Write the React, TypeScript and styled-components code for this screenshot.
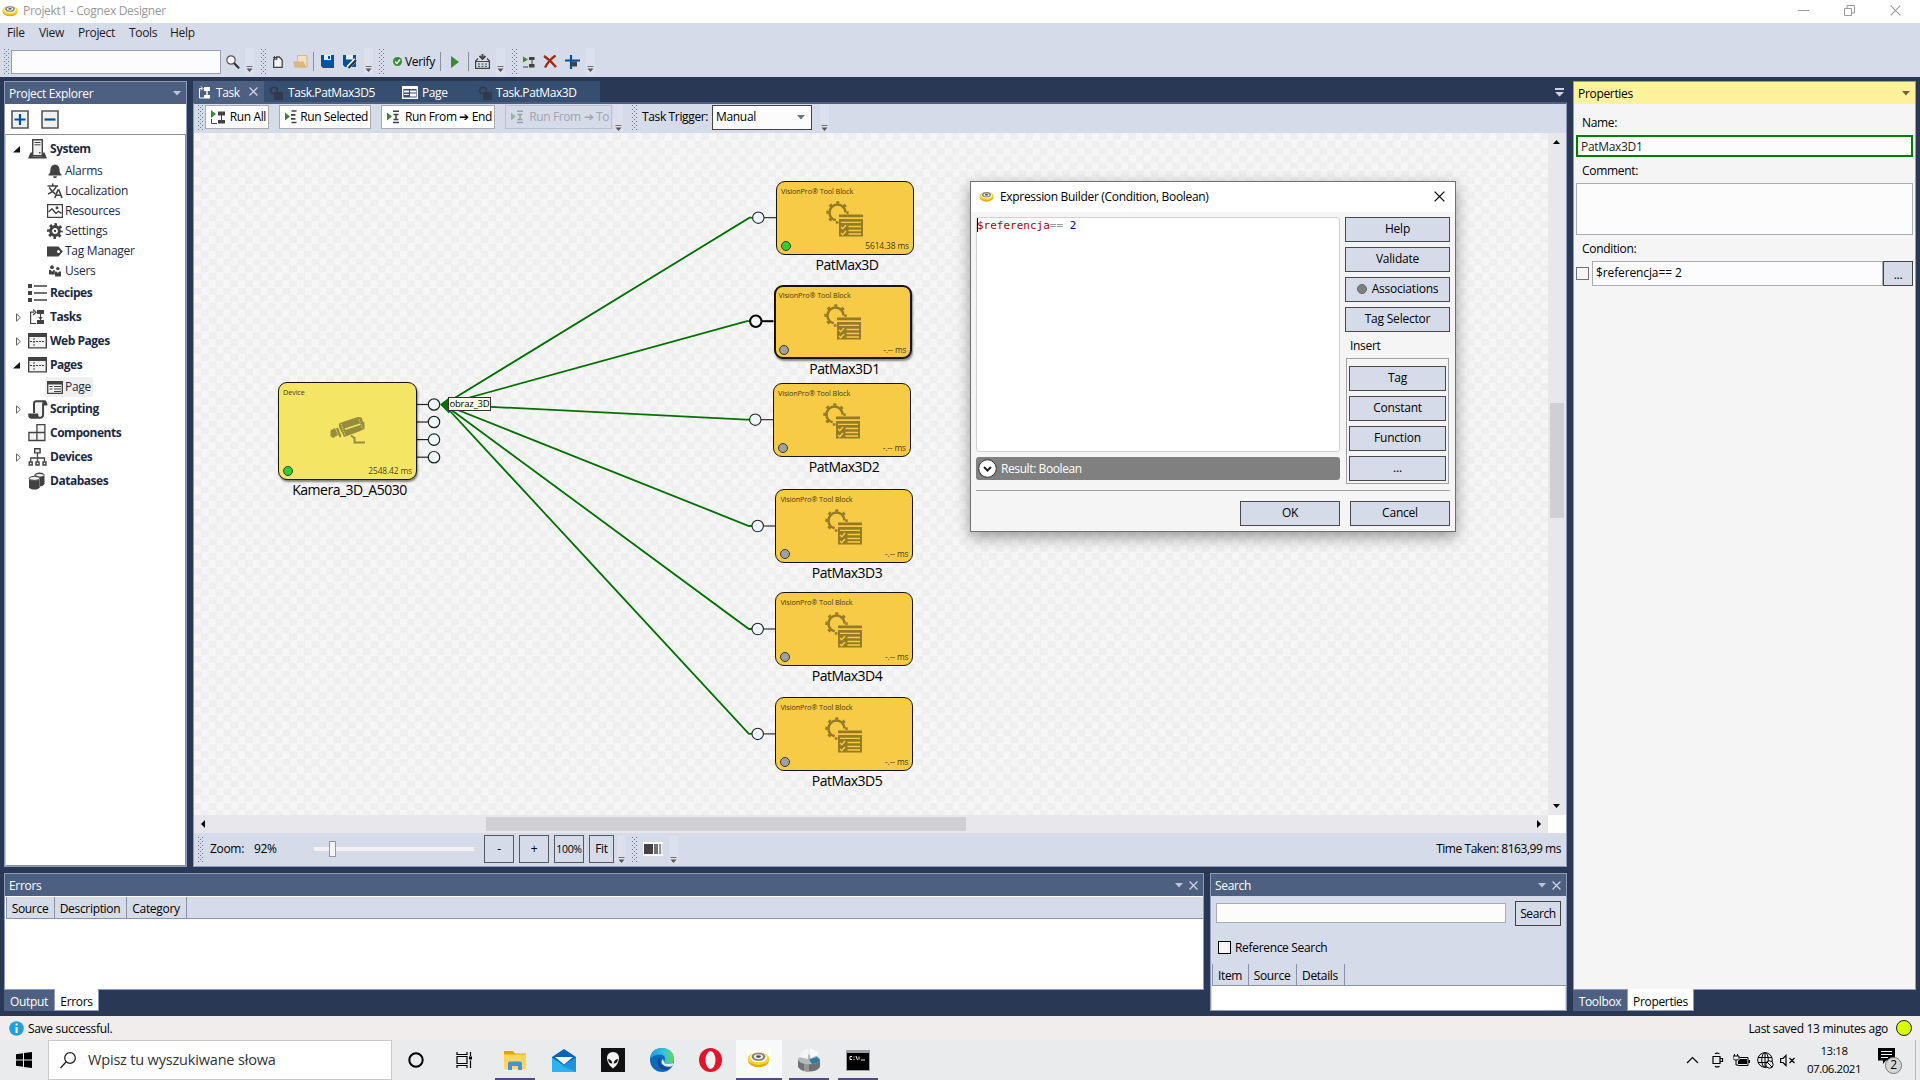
import React from "react";
import styled, { createGlobalStyle, css } from "styled-components";

const c = {
  navy: "#293955",
  steel: "#4d6082",
  edge: "#8e9bbc",
  pale: "#d6dbe9",
  ink: "#1b1b1c",
  glyph: "#424242",
  green: "#388a34",
  blue: "#00539c",
};

const Global = createGlobalStyle`
  * { box-sizing: border-box; }
  html, body { margin: 0; padding: 0; overflow: hidden; }
  body { font-family: "Open Sans", "Noto Sans", sans-serif; font-size: 12px; letter-spacing: -0.32px; line-height: 16px; color: #000; }
  svg { display: block; flex: none; }
`;

const Frame = styled.div`
  position: relative;
  width: 1920px;
  height: 1080px;
  display: flex;
  flex-direction: column;
  overflow: hidden;
  white-space: nowrap;
`;

/* ---------- window chrome ---------- */
const TitleBar = styled.header`
  height: 23px;
  flex: none;
  display: flex;
  align-items: center;
  padding: 1px 19px 2px 2px;
  background: #fff;
  color: #999;
  gap: 5px;
`;
const WindowControls = styled.div`
  margin-left: auto;
  display: flex;
  gap: 35px;
  padding-bottom: 2px;
`;
const MenuBar = styled.nav`
  height: 20px;
  flex: none;
  display: flex;
  align-items: center;
  background: ${c.pale};
  color: ${c.ink};
`;
const MenuItem = styled.span<{ $w: number }>`
  width: ${(p) => p.$w}px;
`;
const ToolBar = styled.div`
  height: 34px;
  flex: none;
  display: flex;
  align-items: center;
  padding: 3px 0 0 4px;
  background: ${c.pale};
`;
const QuickBox = styled.div`
  width: 210px;
  height: 24px;
  border: 1px solid #999faf;
  background: #fcfcfc;
  margin-right: 5px;
`;
const ToolIcon = styled.span<{ $w: number }>`
  width: ${(p) => p.$w}px;
  display: flex;
  flex: none;
`;
const Grip = styled.i<{ $gap?: number }>`
  flex: none;
  width: 5px;
  height: 25px;
  margin-right: ${(p) => (p.$gap ?? 0) + 1}px;
  background-image: linear-gradient(#747b8e, #747b8e), linear-gradient(#747b8e, #747b8e),
    linear-gradient(#747b8e, #747b8e);
  background-size: 1px 1px;
  background-repeat: repeat-y;
  background-image: conic-gradient(from 270deg at 1px 1px, #6d7488 90deg, transparent 0),
    conic-gradient(from 270deg at 1px 1px, #6d7488 90deg, transparent 0);
  background-size: 4px 4px;
  background-position: 0 0, 2px 2px;
  background-repeat: repeat;
`;
const OverflowBox = styled.span<{ $gap?: number; $pad?: number }>`
  flex: none;
  width: 9px;
  height: 27px;
  background: #dce0ec;
  display: flex;
  align-items: flex-end;
  justify-content: center;
  padding-bottom: ${(p) => p.$pad ?? 3}px;
  margin-right: ${(p) => p.$gap ?? 0}px;
`;
const Divider = styled.i<{ $gap: number }>`
  width: 1px;
  height: 19px;
  background: #8591a2;
  margin-right: ${(p) => p.$gap}px;
`;
const VerifyLabel = styled.span`
  width: 35px;
`;

const Overflow = ({ gap, pad }: { gap?: number; pad?: number }) => (
  <OverflowBox $gap={gap} $pad={pad}>
    <svg width="7" height="6">
      <path d="M0.5 0.5h6" stroke="#717171" />
      <path d="M0.5 2.5h6L3.5 6z" fill="#555" />
    </svg>
  </OverflowBox>
);

/* ---------- docking area ---------- */
const Workspace = styled.main`
  height: 939px;
  flex: none;
  display: flex;
  gap: 6px;
  padding: 4px 0 5px 4px;
  background: ${c.navy};
`;
const MainColumn = styled.div`
  width: 1563px;
  display: flex;
  flex-direction: column;
  gap: 6px;
`;
const UpperRow = styled.div`
  height: 786px;
  display: flex;
  gap: 6px;
`;
const LowerRow = styled.div`
  height: 138px;
  display: flex;
  gap: 6px;
`;
const DockColumn = styled.section<{ $w: number }>`
  width: ${(p) => p.$w}px;
  height: 100%;
  display: flex;
  flex-direction: column;
`;
const DockPanel = styled.div<{ $bg?: string }>`
  flex: 1;
  min-height: 0;
  display: flex;
  flex-direction: column;
  border: 1px solid ${c.edge};
  background: ${(p) => p.$bg ?? "#fff"};
`;
const DockHeader = styled.div<{ $active?: boolean }>`
  height: 22px;
  flex: none;
  display: flex;
  align-items: center;
  justify-content: space-between;
  padding: 2px 5px 0 4px;
  background: ${(p) => (p.$active ? "#fff29d" : c.steel)};
  color: ${(p) => (p.$active ? "#000" : "#fff")};
`;
const HeaderTools = styled.span`
  display: flex;
  align-items: center;
  gap: 6px;
  padding-bottom: 2px;
`;
const DockTabs = styled.div`
  height: 21px;
  flex: none;
  display: flex;
`;
const DockTab = styled.span<{ $w: number; $on?: boolean }>`
  width: ${(p) => p.$w}px;
  text-align: center;
  padding-top: 4px;
  background: ${(p) => (p.$on ? "#fff" : c.steel)};
  color: ${(p) => (p.$on ? "#000" : "#fff")};
  ${(p) =>
    p.$on &&
    css`
      margin-top: -1px;
      padding-top: 5px;
      border: 1px solid ${c.edge};
      border-top: 0;
    `}
`;

const Caret = ({ fill = "#bdc5d8" }: { fill?: string }) => (
  <svg width="8" height="5">
    <path d="M0 0h8L4 4.5z" fill={fill} />
  </svg>
);
const Cross = ({ size = 9, color = "#ced4e3", w = 1.4 }: { size?: number; color?: string; w?: number }) => (
  <svg width={size} height={size} viewBox="0 0 10 10">
    <path d="M0.6 0.6l8.8 8.8M9.4 0.6L0.6 9.4" stroke={color} strokeWidth={w} fill="none" />
  </svg>
);

/* ---------- project explorer ---------- */
const ExpandBar = styled.div`
  height: 30px;
  flex: none;
  display: flex;
  align-items: center;
  gap: 12px;
  padding: 0 6px;
`;
const Tree = styled.ul`
  flex: 1;
  margin: 0;
  padding: 2px 0 0 0;
  list-style: none;
  border: 1px solid #8a8f99;
  border-left-color: #c4c8d2;
  color: #1e1e1e;
`;
const TreeRow = styled.li<{ $child?: boolean }>`
  display: flex;
  align-items: center;
  height: ${(p) => (p.$child ? 20 : 24)}px;
  padding-left: ${(p) => (p.$child ? 39 : 7)}px;
`;
const Arrow = styled.span`
  width: 15px;
  display: flex;
`;
const RootIcon = styled.span`
  width: 22px;
  display: flex;
`;
const RootLabel = styled.b`
  color: #1b2a47;
  font-weight: 700;
  letter-spacing: -0.48px;
`;
const Child = styled.span<{ $on?: boolean }>`
  display: flex;
  align-items: center;
  gap: 2px;
  height: 20px;
  padding: 0 2px;
  color: #1b2a47;
  letter-spacing: -0.26px;
  background: ${(p) => (p.$on ? "#f0f0f0" : "transparent")};
`;

const G = c.glyph;
const icons: Record<string, React.ReactNode> = {
  System: (
    <svg width="19" height="20" viewBox="0 0 19 20">
      <path d="M0 19.5h19l-2.5-6h-2.6v4H4.4v-4H2.5z" fill={G} />
      <path d="M4.7 0.7h9.6v16H4.7z" fill="#f0f0f0" stroke={G} strokeWidth="1.4" />
      <path d="M6.5 3.5h6M6.5 5.8h6" stroke={G} />
      <path d="M11 13h1.5v1.5H11z" fill={G} />
    </svg>
  ),
  Recipes: (
    <svg width="19" height="18" viewBox="0 0 19 18">
      <path d="M0 0h4v4H0zM0 7h4v4H0zM0 14h4v4H0z" fill={G} />
      <path d="M6 2h13M6 9h13M6 16h13" stroke={G} strokeWidth="1.3" />
    </svg>
  ),
  Tasks: (
    <svg width="19" height="16" viewBox="0 0 19 16">
      <path d="M8 14.5H2.6V3.2H6" fill="none" stroke={G} strokeWidth="1.2" />
      <path d="M5 0.5L8 3.2 5 6" fill="none" stroke={G} strokeWidth="1.2" />
      <path d="M9 1h7v4H9zM9 11h7v4H9z" fill={G} />
      <path d="M12.5 5v6M10.7 8l1.8 2 1.8-2" fill="none" stroke={G} strokeWidth="1.1" />
    </svg>
  ),
  Web: (
    <svg width="19" height="16" viewBox="0 0 19 16">
      <path d="M0.7 0.7h17.6v14.2H0.7z" fill="#f3f3f3" stroke={G} strokeWidth="1.4" />
      <path d="M0 0h19v4H0z" fill={G} />
      <path d="M2 8.5h15" stroke={G} strokeDasharray="2 1" />
      <path d="M6 5v9" stroke={G} strokeDasharray="2 1" />
    </svg>
  ),
  Scripting: (
    <svg width="20" height="19" viewBox="0 0 20 19">
      <path d="M6 13V3.5Q6 1.2 8.4 1.2h9.2q-2.5 0.6-2.5 3.4v9.8q0 3.4-3.6 3.4H3.6q-2.4 0-2.4-3.4h8q0 3.4 2.2 3.4" fill="#f3f3f3" stroke={G} strokeWidth="2" />
      <path d="M14.6 1.2h3.6q1.3 0.8 1.3 4.2h-4.4" fill={G} />
      <path d="M1 14.2h8.5l1 3.8H3.5Q1 18 1 14.2z" fill={G} />
    </svg>
  ),
  Components: (
    <svg width="18" height="18" viewBox="0 0 18 18">
      <path d="M8.9 0.7h8v7.8h-8zM0.9 8.5h8v8h-8zM8.9 8.5h8v8h-8z" fill="#f3f3f3" stroke={G} strokeWidth="1.3" />
    </svg>
  ),
  Devices: (
    <svg width="19" height="18" viewBox="0 0 19 18">
      <path d="M6.7 0.7h5.4v4.2H6.7zM1.2 14h3v3h-3zM8 14h3v3H8zM15 14h3v3h-3z" fill="#f3f3f3" stroke={G} strokeWidth="1.4" />
      <path d="M9.5 5v8.5M2.7 13.5V10h13.8v3.5" fill="none" stroke={G} strokeWidth="1.3" />
    </svg>
  ),
  Databases: (
    <svg width="18" height="18" viewBox="0 0 18 18">
      <path d="M6 3.4Q7.5 0.6 11.5 0.6t5 2V12q-1 2-4.6 2.5V6" fill={G} />
      <path d="M1 6.6v8.6Q2.2 17.6 6.3 17.6t5.4-2.4V6.6z" fill={G} />
      <ellipse cx="6.4" cy="6.4" rx="5.2" ry="2" fill="#f3f3f3" stroke={G} />
      <path d="M7 3.1q1.6-1.2 4.4-1.2t4.4 0.9-4 1.9" fill="#f3f3f3" />
    </svg>
  ),
  Alarms: (
    <svg width="16" height="15" viewBox="0 0 16 15">
      <path d="M8 0.5q4.6 0.6 4.6 5.5 0 3.6 1.9 4.2v1.2H1.5v-1.2Q3.4 9.6 3.4 6 3.4 1.1 8 0.5zM6 12.3h4q-0.3 2-2 2t-2-2z" fill={G} />
    </svg>
  ),
  Localization: (
    <svg width="16" height="16" viewBox="0 0 16 16">
      <path d="M0.5 3h10.5M5.7 0.5V3M2.2 4.5q3 4.5 6.3 6.5M9.3 3.5Q7 8.5 1 11" fill="none" stroke={G} strokeWidth="1.5" />
      <path d="M7.8 15l3.1-8h1l3.1 8M8.9 12.3h5" fill="none" stroke={G} strokeWidth="1.6" />
    </svg>
  ),
  Resources: (
    <svg width="16" height="14" viewBox="0 0 16 14">
      <path d="M0.6 0.6h14.8v12.8H0.6z" fill="#fff" stroke={G} strokeWidth="1.2" />
      <path d="M1.5 8L5 4.8 9 9.5l2.5-2.2 3 2" fill="none" stroke={G} strokeWidth="1.4" />
      <circle cx="10" cy="3.8" r="1.5" fill={G} />
    </svg>
  ),
  Settings: (
    <svg width="16" height="16" viewBox="0 0 16 16">
      <circle cx="8" cy="8" r="4.4" fill="none" stroke={G} strokeWidth="3" />
      <circle cx="8" cy="8" r="6.5" fill="none" stroke={G} strokeWidth="2.8" strokeDasharray="2.55" strokeDashoffset="1.27" />
      <circle cx="8" cy="8" r="1.2" fill={G} />
    </svg>
  ),
  Tag: (
    <svg width="16" height="11" viewBox="0 0 16 11">
      <path d="M0 0.5h11.5l4.3 5-4.3 5H0z" fill={G} />
      <circle cx="11.5" cy="5.5" r="1.5" fill="#fff" />
    </svg>
  ),
  Users: (
    <svg width="16" height="12" viewBox="0 0 16 12">
      <circle cx="5" cy="2.2" r="1.9" fill={G} />
      <circle cx="10.8" cy="3.6" r="1.7" fill={G} />
      <path d="M2 5h1.8l1.4 1.7L6.6 5h1.2v4.5H2zM8 6.5h1.5l1.3 1.5 1.3-1.5H14v5H8z" fill={G} />
    </svg>
  ),
  Page: (
    <svg width="16" height="13" viewBox="0 0 16 13">
      <path d="M0.7 0.7h14.6v11.6H0.7z" fill="#f3f3f3" stroke={G} strokeWidth="1.3" />
      <path d="M0 0h16v3.5H0z" fill={G} />
      <path d="M2.5 5.5h3M7 5.5h7M2.5 8h3M7 8h7M7 10.5h7" stroke={G} strokeWidth="1.2" />
    </svg>
  ),
};

type Node = { label: string; icon: string; state?: "open" | "closed"; child?: boolean; on?: boolean };
const treeRows: Node[] = [
  { label: "System", icon: "System", state: "open" },
  { label: "Alarms", icon: "Alarms", child: true },
  { label: "Localization", icon: "Localization", child: true },
  { label: "Resources", icon: "Resources", child: true },
  { label: "Settings", icon: "Settings", child: true },
  { label: "Tag Manager", icon: "Tag", child: true },
  { label: "Users", icon: "Users", child: true },
  { label: "Recipes", icon: "Recipes" },
  { label: "Tasks", icon: "Tasks", state: "closed" },
  { label: "Web Pages", icon: "Web", state: "closed" },
  { label: "Pages", icon: "Web", state: "open" },
  { label: "Page", icon: "Page", child: true, on: true },
  { label: "Scripting", icon: "Scripting", state: "closed" },
  { label: "Components", icon: "Components" },
  { label: "Devices", icon: "Devices", state: "closed" },
  { label: "Databases", icon: "Databases" },
];

const ExpandIcon = ({ plus }: { plus?: boolean }) => (
  <svg width="18" height="19" viewBox="0 0 18 19">
    <path d="M1 1h16v17H1z" fill="#f0f0f0" stroke="#555" strokeWidth="1.6" />
    <path d={plus ? "M3.5 9.5h11M9 4v11" : "M3.5 9.5h11"} stroke={c.blue} strokeWidth="2.2" />
  </svg>
);

/* ---------- document area ---------- */
const DocColumn = styled.section`
  width: 1374px;
  display: flex;
  flex-direction: column;
`;
const DocTabs = styled.div`
  height: 22px;
  flex: none;
  display: flex;
  border-bottom: 1px solid ${c.steel};
  color: #fff;
`;
const DocTab = styled.div<{ $w: number; $on?: boolean; $pad: number }>`
  width: ${(p) => p.$w}px;
  height: 21px;
  padding: 2px 0 0 ${(p) => p.$pad}px;
  display: flex;
  align-items: center;
  letter-spacing: -0.42px;
  background: ${(p) => (p.$on ? c.steel : "#364e6f")};
`;
const DocTabLabel = styled.span<{ $ml: number }>`
  margin-left: ${(p) => p.$ml}px;
`;
const TabClose = styled.span`
  margin-left: auto;
  margin-right: 6px;
  padding-bottom: 2px;
`;
const TabsMenu = styled.span`
  margin: 7px 3px 0 auto;
`;
const DocBody = styled.div`
  flex: 1;
  display: flex;
  flex-direction: column;
  border: 1px solid ${c.edge};
  border-top-color: ${c.steel};
  background: ${c.pale};
`;
const RunBar = styled.div`
  height: 29px;
  flex: none;
  display: flex;
  align-items: center;
  padding: 0 0 3px 4px;
`;
const RunButton = styled.span<{ $w: number; $gap: number; $off?: boolean }>`
  width: ${(p) => p.$w}px;
  height: 24px;
  margin-right: ${(p) => p.$gap}px;
  display: flex;
  align-items: center;
  justify-content: space-between;
  padding: 0 2px 0 5px;
  border: 1px solid ${(p) => (p.$off ? "#bcc0cc" : "#ababab")};
  background: ${(p) => (p.$off ? "transparent" : "#fff")};
  color: ${(p) => (p.$off ? "#a2a4b0" : "#000")};
  letter-spacing: -0.38px;
`;
const RunIcon = styled.span<{ $off?: boolean }>`
  opacity: ${(p) => (p.$off ? 0.4 : 1)};
`;
const TriggerLabel = styled.span`
  width: 74px;
  padding-left: 4px;
  letter-spacing: -0.36px;
`;
const Combo = styled.span`
  width: 100px;
  height: 25px;
  margin: 0 8px 0 0;
  padding: 0 6px 0 3px;
  display: flex;
  align-items: center;
  justify-content: space-between;
  border: 1px solid #434346;
  background: #fcfcfc;
`;
const CanvasGrid = styled.div`
  display: grid;
  grid-template: 682px 18px / 1354px 18px;
  flex: none;
  background: #fff;
`;
const Canvas = styled.div`
  position: relative;
  overflow: hidden;
  background: repeating-conic-gradient(#efefef 0% 25%, #f6f6f6 0% 50%) 0 0 / 14.72px 14.72px;
`;
const VScroll = styled.div`
  background: #e8e8ec;
  display: flex;
  flex-direction: column;
  align-items: center;
  padding: 7px 1px 7px 0;
`;
const VThumb = styled.i`
  width: 14px;
  height: 115px;
  background: #cfcfd4;
  margin: 259px 0 auto;
`;
const HScroll = styled.div`
  background: #e8e8ec;
  display: flex;
  align-items: center;
  padding: 0 7px 0 7px;
`;
const HThumb = styled.i`
  width: 480px;
  height: 14px;
  background: #cfcfd4;
  margin: 0 auto 0 281px;
`;
const ZoomBar = styled.div`
  flex: 1;
  display: flex;
  align-items: center;
  padding: 0 5px 1px 4px;
`;
const ZoomText = styled.span<{ $w: number }>`
  width: ${(p) => p.$w}px;
  padding-bottom: 1px;
`;
const Slider = styled.div`
  width: 160px;
  height: 4px;
  background: #f3f3f5;
  display: flex;
  align-items: center;
  padding-left: 15px;
  margin-right: 10px;
`;
const SliderThumb = styled.i`
  width: 7px;
  height: 16px;
  background: #f5f5f5;
  border: 1px solid #999;
`;
const ZoomButton = styled.span<{ $w?: number; $gap?: number; $small?: boolean }>`
  width: ${(p) => p.$w ?? 30}px;
  height: 28px;
  margin-right: ${(p) => p.$gap ?? 5}px;
  display: flex;
  align-items: center;
  justify-content: center;
  border: 1px solid #555963;
  font-size: ${(p) => (p.$small ? 10.5 : 12)}px;
`;
const TimeTaken = styled.span`
  margin-left: auto;
  letter-spacing: -0.45px;
`;

/* ---------- diagram ---------- */
const Wires = styled.svg`
  position: absolute;
  inset: 0;
`;
const Block = styled.div<{ $x: number; $y: number; $w: number; $h: number; $bg: string; $sel?: boolean; $shadow?: boolean }>`
  position: absolute;
  left: ${(p) => p.$x - 194}px;
  top: ${(p) => p.$y - 133}px;
  width: ${(p) => p.$w}px;
  height: ${(p) => p.$h}px;
  border: ${(p) => (p.$sel ? 2 : 1)}px solid #16160e;
  border-radius: 9px;
  background: ${(p) => p.$bg};
  box-shadow: ${(p) => (p.$shadow ? "1px 2px 2px rgba(0,0,0,.45)" : "none")};
  display: flex;
  flex-direction: column;
  justify-content: space-between;
  align-items: center;
  padding: ${(p) => (p.$sel ? "2px 3px 2px" : "3px 4px 3px")};
`;
const BlockKind = styled.span`
  align-self: flex-start;
  font: 7.3px/12px "Open Sans", sans-serif;
  letter-spacing: -0.13px;
  color: rgba(0, 0, 0, 0.78);
`;
const BlockGlyph = styled.span<{ $up: number }>`
  margin-top: -${(p) => p.$up}px;
`;
const BlockFoot = styled.span`
  width: 100%;
  height: 10px;
  display: flex;
  align-items: center;
  justify-content: space-between;
  font: 8.4px/10px "Open Sans", sans-serif;
  letter-spacing: -0.12px;
  color: rgba(0, 0, 0, 0.75);
`;
const Lamp = styled.i<{ $on?: boolean }>`
  width: 10px;
  height: 10px;
  border-radius: 50%;
  border: 1.5px solid #3a3a25;
  background: ${(p) => (p.$on ? "#32cd32" : "#a0a0a0")};
`;
const BlockName = styled.span<{ $x: number; $y: number }>`
  position: absolute;
  left: ${(p) => p.$x - 294}px;
  top: ${(p) => p.$y - 143}px;
  width: 200px;
  text-align: center;
  font-size: 14px;
  line-height: 20px;
  letter-spacing: -0.5px;
`;
const PortTip = styled.span`
  position: absolute;
  left: 254px;
  top: 264px;
  width: 43px;
  height: 14px;
  border: 1px solid #333;
  background: #ffffe1;
  font-size: 9.5px;
  line-height: 11px;
  letter-spacing: -0.2px;
  text-align: center;
`;

const ToolBlockGlyph = () => (
  <svg width="38" height="36" viewBox="0 0 38 36">
    <circle cx="11.5" cy="11.5" r="8" fill="none" stroke="#967b26" strokeWidth="2.6" strokeDasharray="36 14.3" strokeDashoffset="-14.3" />
    <circle cx="11.5" cy="11.5" r="10" fill="none" stroke="#967b26" strokeWidth="2.4" strokeDasharray="3.2 4.65" strokeDashoffset="1.6" />
    <path d="M12.5 13h25v22h-25z" fill="#f7cb45" />
    <path d="M13 13.5h24v2.8H13zM13 18h24v17.5H13z" fill="#967b26" />
    <path d="M15 21.3h20M22.5 25.5H35M22.5 29.5H35M22.5 33H35" stroke="#f7cb45" strokeWidth="1.3" />
    <path d="M15 26l1.7 1.7 3.3-3.7M15 32l1.7 1.7 3.3-3.7" stroke="#f7cb45" strokeWidth="1.4" fill="none" />
  </svg>
);
const CameraGlyph = () => (
  <svg width="36" height="28" viewBox="0 0 36 28">
    <g fill="#978c3e">
      <path d="M9 11V7.500L14 5.500 28 1l3.500 0.500 1.300 3.500 1.700 2v6L29 15.500 14 21z" />
      <path d="M0.500 14.500l4.500-2.500 3 7-5 3L0.500 20z" />
      <path d="M6 12.500l2-1 3.500 9-2 1z" />
    </g>
    <path d="M15 13.300l15-5" stroke="#f4e564" strokeWidth="1.500" />
    <path d="M11 8l4 11M29 3l3.500 10" stroke="#f4e564" strokeWidth="0.800" strokeDasharray="1.500 1" />
    <path d="M21 19.500l3.500 2.500v4.500H35" stroke="#978c3e" strokeWidth="2" fill="none" />
  </svg>
);

const blocks = [
  { name: "PatMax3D", x: 776, y: 181, lx: 847, ms: "5614.38 ms", on: true },
  { name: "PatMax3D1", x: 773.5, y: 284.5, lx: 844.5, ms: "-.-- ms", sel: true },
  { name: "PatMax3D2", x: 773, y: 383, lx: 844, ms: "-.-- ms" },
  { name: "PatMax3D3", x: 775.4, y: 489.3, lx: 847, ms: "-.-- ms" },
  { name: "PatMax3D4", x: 775.4, y: 592.3, lx: 847, ms: "-.-- ms" },
  { name: "PatMax3D5", x: 775.4, y: 697.2, lx: 847, ms: "-.-- ms" },
];

/* ---------- lists and forms ---------- */
const Columns = styled.div`
  height: 22px;
  flex: none;
  margin: 1px 0 0 1px;
  display: flex;
  border-bottom: 1px solid #8a93ab;
  border-left: 1px solid #8a93ab;
  background: ${c.pale};
`;
const Column = styled.span<{ $w: number }>`
  width: ${(p) => p.$w}px;
  padding-right: 1px;
  border-right: 1px solid #8a93ab;
  text-align: center;
  line-height: 23px;
`;
const SearchForm = styled.div`
  display: flex;
  align-items: center;
  justify-content: space-between;
  height: 34px;
  padding: 0 5px 0 5px;
`;
const SearchInput = styled.div`
  width: 290px;
  height: 20px;
  border: 1px solid #ababb3;
  background: #fcfcfc;
`;
const SearchButton = styled.span`
  width: 46px;
  height: 25px;
  border: 1px solid #434346;
  text-align: center;
  line-height: 23px;
  letter-spacing: -0.4px;
`;
const CheckRow = styled.label`
  display: flex;
  align-items: center;
  gap: 4px;
  height: 33px;
  padding: 2px 0 0 7px;
`;
const CheckBox = styled.i<{ $dark?: boolean }>`
  flex: none;
  width: 13px;
  height: 13px;
  border: 1px solid ${(p) => (p.$dark ? "#000" : "#717171")};
  background: #f6f6f6;
`;
const ResultArea = styled.div`
  flex: 1;
  margin: 0 1px;
  background: #fff;
`;
const FormBody = styled.div`
  padding: 9px 2px 0 2px;
  display: flex;
  flex-direction: column;
`;
const FieldLabel = styled.span<{ $h: number; $line: number }>`
  height: ${(p) => p.$h}px;
  padding-left: 6px;
  line-height: ${(p) => p.$line}px;
`;
const NameField = styled.div`
  height: 22px;
  border: 2px solid #008000;
  background: #fcfcfc;
  padding-left: 3px;
  line-height: 20px;
  color: #1e1e1e;
`;
const CommentField = styled.div`
  height: 52px;
  border: 1px solid #ababb3;
  background: #fcfcfc;
`;
const ConditionRow = styled.div`
  display: flex;
  align-items: center;
`;
const ConditionField = styled.div`
  width: 291px;
  height: 25px;
  margin-left: 3px;
  border: 1px solid #ababb3;
  background: #fcfcfc;
  padding-left: 3px;
  line-height: 21px;
  letter-spacing: -0.12px;
`;
const MoreButton = styled.span`
  flex: 1;
  height: 25px;
  border: 1px solid #434346;
  background: ${c.pale};
  text-align: center;
  line-height: 25px;
`;

/* ---------- dialog ---------- */
const Dialog = styled.div`
  position: absolute;
  left: 970px;
  top: 181px;
  width: 486px;
  height: 351px;
  border: 1px solid #707070;
  background: #f5f5f5;
  box-shadow: 0 5px 14px rgba(0, 0, 0, 0.38);
  display: flex;
  flex-direction: column;
`;
const DialogTitle = styled.div`
  height: 30px;
  flex: none;
  display: flex;
  align-items: center;
  gap: 6px;
  padding: 0 10px 1px 8px;
  background: #fff;
`;
const DialogText = styled.span`
  padding-top: 1px;
`;
const DialogClose = styled.span`
  margin-left: auto;
`;
const DialogBody = styled.div`
  display: flex;
  justify-content: space-between;
  margin: 5px 5px 0;
  height: 274px;
  border-bottom: 1px solid #a0a0a0;
`;
const EditorColumn = styled.div`
  width: 364px;
  display: flex;
  flex-direction: column;
  gap: 5px;
`;
const Editor = styled.div`
  height: 235px;
  border: 1px solid #d2d2d2;
  border-radius: 3px;
  background: #fff;
  font: 11px/15px "DejaVu Sans Mono", monospace;
  letter-spacing: 0;
  white-space: pre;
  display: flex;
`;
const Caretline = styled.i`
  width: 1px;
  height: 14px;
  background: #000;
  margin-right: -1px;
`;
const Token = styled.span<{ $c: string }>`
  color: ${(p) => p.$c};
`;
const ResultBar = styled.div`
  height: 23px;
  border-radius: 3px;
  background: #808080;
  color: #fff;
  display: flex;
  align-items: center;
  gap: 4px;
  padding-left: 2px;
  letter-spacing: -0.4px;
`;
const SideColumn = styled.div`
  width: 105px;
  display: flex;
  flex-direction: column;
  gap: 5px;
`;
const Push = styled.button<{ $w?: number }>`
  width: ${(p) => (p.$w ? `${p.$w}px` : "100%")};
  height: 25px;
  flex: none;
  padding: 0 0 1px;
  display: flex;
  align-items: center;
  justify-content: center;
  gap: 5px;
  border: 1px solid #4a4a4e;
  border-radius: 0;
  background: ${c.pale};
  font: inherit;
  letter-spacing: -0.22px;
  color: #000;
`;
const Dot = styled.i`
  width: 10px;
  height: 10px;
  border-radius: 50%;
  background: #808080;
  border: 1px solid #666;
`;
const InsertLabel = styled.span`
  padding: 1px 0 0 5px;
  height: 16px;
`;
const InsertBox = styled.div`
  margin: 0 1px;
  height: 126px;
  padding: 7px 2px 0;
  border: 1px solid #a0a0a0;
  display: flex;
  flex-direction: column;
  gap: 5px;
`;
const DialogFoot = styled.div`
  display: flex;
  justify-content: flex-end;
  gap: 10px;
  padding: 10px 5px 0;
`;

/* ---------- status bar and taskbar ---------- */
const StatusBar = styled.footer`
  height: 24px;
  flex: none;
  display: flex;
  align-items: center;
  gap: 4px;
  padding: 1px 8px 0 9px;
  background: #f1edec;
`;
const Saved = styled.span`
  margin-left: auto;
`;
const SaveLamp = styled.i`
  width: 16px;
  height: 16px;
  border-radius: 50%;
  border: 1px solid #1c1c1c;
  background: #d8ff00;
  margin: 0 0 2px 4px;
`;
const Taskbar = styled.div`
  height: 40px;
  flex: none;
  display: flex;
  background: #e9ebed;
`;
const TaskCell = styled.div<{ $w: number; $run?: boolean; $on?: boolean; $gap?: number }>`
  width: ${(p) => p.$w}px;
  margin-right: ${(p) => p.$gap ?? 0}px;
  display: flex;
  align-items: center;
  justify-content: center;
  background: ${(p) => (p.$on ? "#f8f9fa" : "transparent")};
  border-bottom: 2px solid ${(p) => (p.$run ? "#504a86" : "transparent")};
  padding-top: 2px;
`;
const WinSearch = styled.div`
  width: 344px;
  border: 1px solid #c9c9ca;
  background: #fff;
  display: flex;
  align-items: center;
  gap: 12px;
  padding-left: 11px;
  font-size: 14.5px;
  letter-spacing: -0.18px;
  color: #333;
`;
const Tray = styled.div`
  margin-left: auto;
  width: 234px;
  display: flex;
  align-items: center;
`;
const TrayIcon = styled.span<{ $w: number }>`
  width: ${(p) => p.$w}px;
  flex: none;
`;
const Clock = styled.div`
  width: 58px;
  display: flex;
  flex-direction: column;
  align-items: center;
  font-size: 11.5px;
  line-height: 18px;
  letter-spacing: -0.45px;
`;
const Notices = styled.div`
  position: relative;
  width: 38px;
  margin-left: 14px;
  padding-left: 1px;
  height: 24px;
`;
const NoticeCount = styled.span`
  position: absolute;
  left: 8px;
  top: 9px;
  width: 17px;
  height: 17px;
  border-radius: 50%;
  border: 1px solid #777;
  background: #d7d7d7;
  text-align: center;
  line-height: 14px;
`;
const ShowDesktop = styled.i`
  width: 5px;
  height: 40px;
  border-left: 1px solid #b5b7ba;
`;

const Cognex = ({ w = 16 }: { w?: number }) => (
  <svg width={w} height={w * 0.75} viewBox="0 0 24 18">
    <ellipse cx="12" cy="10" rx="11" ry="7" fill="#e8a900" />
    <ellipse cx="12" cy="8" rx="11.5" ry="6.5" fill="#ffd42a" />
    <ellipse cx="12" cy="6.8" rx="8.7" ry="5" fill="#fff" />
    <ellipse cx="12" cy="6" rx="7.2" ry="4.3" fill="#808080" />
    <ellipse cx="12" cy="6" rx="4.8" ry="2.6" fill="#f2f2f2" />
    <ellipse cx="12" cy="5.8" rx="2.6" ry="1.4" fill="#555" />
  </svg>
);
const FlowGlyph = ({ color = G }: { color?: string }) => (
  <svg width="13" height="13" viewBox="0 0 13 13">
    <path d="M6 12H1.5V2.5H4" fill="none" stroke={color} />
    <path d="M3 0.5l2 2-2 2" fill="none" stroke={color} />
    <path d="M6 1h6v4H6zM6 9h6v3.5H6z" fill={color} />
    <path d="M9 4v6" stroke={color} strokeWidth="1.5" />
  </svg>
);
const BlockTabGlyph = () => (
  <svg width="14" height="14" viewBox="0 0 14 14">
    <circle cx="5" cy="4.5" r="3.3" fill="none" stroke="#303a49" strokeWidth="1.6" />
    <path d="M5 6h9v8H5z" fill="#303a49" />
  </svg>
);
const RunGlyph = ({ kind }: { kind: "all" | "sel" | "from" }) => (
  <svg width="14" height="14" viewBox="0 0 14 14">
    <path d="M0 2.5l5 4-5 4z" fill={c.green} transform={kind === "all" ? "translate(0 -2.5)" : ""} />
    {kind === "all" && (
      <>
        <path d="M0.5 9v4.5H6" fill="none" stroke={G} />
        <path d="M7 1.5h7v4H7zM7 10h7v3.5H7z" fill={G} />
        <path d="M10.5 5v5" stroke={G} />
      </>
    )}
    {kind === "sel" && <path d="M6.500 1h5M6 4.800h4.500M6 8.800h4.500M6.500 12.500h5" stroke={G} strokeWidth="1.700" />}
    {kind === "from" && (
      <>
        <path d="M6 1.200h6M6.500 4.500h5M6 12.600h6" stroke={G} strokeWidth="1.500" />
        <path d="M6.500 9.500h5M9 4.500v5" stroke={G} strokeWidth="1.500" />
      </>
    )}
  </svg>
);

export default function App() {
  return (
    <>
      <Global />
      <Frame>
        <TitleBar>
          <Cognex />
          <span>Projekt1 - Cognex Designer</span>
          <WindowControls>
            <svg width="11" height="11"><path d="M0 5.5h11" stroke="#999" /></svg>
            <svg width="11" height="11"><path d="M0.5 3.5h7v7h-7zM3 3V0.5h7.5v7.5H8" fill="none" stroke="#999" /></svg>
            <Cross size={11} color="#999" w={1} />
          </WindowControls>
        </TitleBar>
        <MenuBar>
          <MenuItem $w={7} />
          <MenuItem $w={32}>File</MenuItem>
          <MenuItem $w={39}>View</MenuItem>
          <MenuItem $w={51}>Project</MenuItem>
          <MenuItem $w={41}>Tools</MenuItem>
          <MenuItem $w={40}>Help</MenuItem>
        </MenuBar>
        <ToolBar>
          <Grip $gap={1} />
          <QuickBox />
          <ToolIcon $w={19}>
            <svg width="14" height="14" viewBox="0 0 14 14">
              <circle cx="5" cy="5" r="4.2" fill="#f4f4f4" stroke="#555" strokeWidth="1.2" />
              <path d="M8 8l5 5.3" stroke="#333" strokeWidth="2.2" />
            </svg>
          </ToolIcon>
          <Overflow gap={7} />
          <Grip $gap={6} />
          <ToolIcon $w={20}>
            <svg width="10" height="12" viewBox="0 0 10 12">
              <path d="M0.7 3.2h3V1h2.6l2.900 3v7.3H0.7z" fill="#f3f3f3" stroke={G} strokeWidth="1.3" />
              <path d="M0 1.5h3M1.5 0v3" stroke={G} />
            </svg>
          </ToolIcon>
          <ToolIcon $w={20}>
            <svg width="15" height="13" viewBox="0 0 15 13">
              <path d="M4.500 0.500h9.500v11.500H4.500z" fill="#f0e0c4" stroke="#dcb67a" />
              <path d="M0 6.500h10.500l3 6H1.500z" fill="#dcb67a" />
            </svg>
          </ToolIcon>
          <Divider $gap={7} />
          <ToolIcon $w={22}>
            <svg width="13" height="13" viewBox="0 0 13 13">
              <path d="M0 0h13v13H2l-2-2z" fill={c.blue} /><path d="M3 0h7v5H3z" fill="#e8ecf4" /><path d="M7 1h2v3H7z" fill={c.blue} />
            </svg>
          </ToolIcon>
          <ToolIcon $w={21}>
            <svg width="14" height="14" viewBox="0 0 14 14">
              <path d="M0 0h13v12H2l-2-2z" fill={c.blue} /><path d="M3 0h7v4.5H3z" fill="#e8ecf4" /><path d="M5 12.5l7.5-8" stroke="#fff" strokeWidth="4" /><path d="M5.5 13L13 5" stroke="#333" strokeWidth="2.2" />
            </svg>
          </ToolIcon>
          <Overflow gap={6} />
          <Grip $gap={8} />
          <ToolIcon $w={12}>
            <svg width="9" height="9"><circle cx="4.5" cy="4.5" r="4.5" fill={c.green} /><path d="M2 4.5l2 2 3-4" stroke="#fff" strokeWidth="1.3" fill="none" /></svg>
          </ToolIcon>
          <VerifyLabel>Verify</VerifyLabel>
          <Divider $gap={10} />
          <ToolIcon $w={17}>
            <svg width="9" height="12"><path d="M0 0l8 6-8 6z" fill={c.green} /></svg>
          </ToolIcon>
          <Divider $gap={6} />
          <ToolIcon $w={21}>
            <svg width="15" height="15" viewBox="0 0 15 15">
              <path d="M7.5 0v4M4.500 2l3 3 3-3" stroke={G} strokeWidth="1.8" fill="none" />
              <path d="M0.6 14.4V7L3 4.5M14.4 14.4V7L12 4.5M0 14.4h15M1 7.5h13" stroke={G} strokeWidth="1.2" fill="none" />
              <path d="M3 10h9M3 12.3h9" stroke={G} strokeDasharray="2 1.5" />
            </svg>
          </ToolIcon>
          <Overflow gap={7} />
          <Grip $gap={5} />
          <ToolIcon $w={20}>
            <svg width="12" height="12" viewBox="0 0 12 12">
              <path d="M0 0.5l5 3-5 3z" fill={c.green} /><path d="M6 1h5.5v3H6zM6 8h5.5v3.5H6z" fill={G} /><path d="M9 4v4M0 11h5" stroke={G} />
            </svg>
          </ToolIcon>
          <ToolIcon $w={22}>
            <svg width="14" height="13" viewBox="0 0 14 13"><path d="M1 1q6 4 12 11M12.5 0.5Q6 5 2 12.5" stroke="#a1260d" strokeWidth="2.3" fill="none" /></svg>
          </ToolIcon>
          <ToolIcon $w={21}>
            <svg width="15" height="14" viewBox="0 0 15 14"><path d="M0 5.500h15M6 0v14" stroke={c.blue} strokeWidth="2.2" /><path d="M7 6.500h5v5H7z" fill={G} /></svg>
          </ToolIcon>
          <Overflow />
        </ToolBar>

        <Workspace>
          <MainColumn>
            <UpperRow>
              <DockColumn $w={183}>
                <DockPanel>
                  <DockHeader>
                    Project Explorer
                    <HeaderTools><Caret /></HeaderTools>
                  </DockHeader>
                  <ExpandBar>
                    <ExpandIcon plus />
                    <ExpandIcon />
                  </ExpandBar>
                  <Tree>
                    {treeRows.map((r) =>
                      r.child ? (
                        <TreeRow key={r.label} $child>
                          <Child $on={r.on}>{icons[r.icon]}<span>{r.label}</span></Child>
                        </TreeRow>
                      ) : (
                        <TreeRow key={r.label}>
                          <Arrow>
                            {r.state === "open" && <svg width="8" height="7"><path d="M7 0v6.5H0z" fill="#111" /></svg>}
                            {r.state === "closed" && <svg width="8" height="9"><path d="M3.5 0.8l3.8 3.7-3.8 3.7z" fill="#fff" stroke="#666" /></svg>}
                          </Arrow>
                          <RootIcon>{icons[r.icon]}</RootIcon>
                          <RootLabel>{r.label}</RootLabel>
                        </TreeRow>
                      )
                    )}
                  </Tree>
                </DockPanel>
              </DockColumn>

              <DocColumn>
                <DocTabs>
                  <DocTab $w={71} $pad={5} $on>
                    <FlowGlyph color="#fff" />
                    <DocTabLabel $ml={5}>Task</DocTabLabel>
                    <TabClose><Cross /></TabClose>
                  </DocTab>
                  <DocTab $w={132} $pad={5}>
                    <BlockTabGlyph />
                    <DocTabLabel $ml={5}>Task.PatMax3D5</DocTabLabel>
                  </DocTab>
                  <DocTab $w={77} $pad={6}>
                    <svg width="16" height="13" viewBox="0 0 16 13">
                      <path d="M0.7 0.7h14.6v11.6H0.7z" fill="#364e6f" stroke="#fff" strokeWidth="1.4" />
                      <path d="M0 0h16v3H0zM2 4.5h5v2H2zM8 4.5h6v2H8zM2 8h5v1H2zM8 7.5h6v3H8z" fill="#fff" />
                    </svg>
                    <DocTabLabel $ml={4}>Page</DocTabLabel>
                  </DocTab>
                  <DocTab $w={127} $pad={5}>
                    <BlockTabGlyph />
                    <DocTabLabel $ml={4}>Task.PatMax3D</DocTabLabel>
                  </DocTab>
                  <TabsMenu>
                    <svg width="9" height="9"><path d="M0 0h9v2H0zM0 4h9L4.5 8.5z" fill="#ced4e3" /></svg>
                  </TabsMenu>
                </DocTabs>
                <DocBody>
                  <RunBar>
                    <Grip $gap={1} />
                    <RunButton $w={64} $gap={10}><RunGlyph kind="all" /><span>Run All</span></RunButton>
                    <RunButton $w={92} $gap={10}><RunGlyph kind="sel" /><span>Run Selected</span></RunButton>
                    <RunButton $w={114} $gap={10}><RunGlyph kind="from" /><span>Run From ➔ End</span></RunButton>
                    <RunButton $w={107} $gap={2} $off><RunIcon $off><RunGlyph kind="from" /></RunIcon><span>Run From ➔ To</span></RunButton>
                    <Overflow gap={9} pad={0} />
                    <Grip />
                    <TriggerLabel>Task Trigger:</TriggerLabel>
                    <Combo>Manual<Caret fill="#717171" /></Combo>
                    <Overflow pad={0} />
                  </RunBar>
                  <CanvasGrid>
                    <Canvas>
                      <Wires width="1354" height="682" viewBox="194 133 1354 682">
                        {blocks.map((b) => {
                          const py = b.y + 36.7;
                          const px = b.x - 17.5;
                          return <path key={b.name} d={`M444 404.5L${px - 9} ${py}H${px - 5}`} fill="none" stroke="#007000" strokeWidth="1.8" />;
                        })}
                        <path d="M440 404.5l9-7 6 7-6 9z" fill="#007000" />
                        {blocks.map((b) => (
                          <g key={b.name} stroke={b.sel ? "#000" : "#222"} strokeWidth={b.sel ? 2 : 1.1}>
                            <path d={`M${b.x - 12} ${b.y + 36.7}H${b.x}`} />
                            <circle cx={b.x - 17.7} cy={b.y + 36.7} r="5.7" fill="#f0f8ff" />
                          </g>
                        ))}
                        {[404.5, 422, 439.6, 457.2].map((y) => (
                          <g key={y} stroke="#222" strokeWidth="1.2">
                            <path d={`M416 ${y}H428`} />
                            <circle cx="434" cy={y} r="5.7" fill="#f0f8ff" />
                          </g>
                        ))}
                      </Wires>
                      <PortTip>obraz_3D</PortTip>
                      <Block $x={278} $y={382} $w={139} $h={98} $bg="#f4e564" $shadow>
                        <BlockKind>Device</BlockKind>
                        <BlockGlyph $up={4}><CameraGlyph /></BlockGlyph>
                        <BlockFoot><Lamp $on />2548.42 ms</BlockFoot>
                      </Block>
                      <BlockName $x={349.5} $y={490}>Kamera_3D_A5030</BlockName>
                      {blocks.map((b) => (
                        <React.Fragment key={b.name}>
                          <Block $x={b.x} $y={b.y} $w={138} $h={74} $bg="#f7cb45" $sel={b.sel} $shadow={b.sel}>
                            <BlockKind>VisionPro® Tool Block</BlockKind>
                            <BlockGlyph $up={1}><ToolBlockGlyph /></BlockGlyph>
                            <BlockFoot><Lamp $on={b.on} />{b.ms}</BlockFoot>
                          </Block>
                          <BlockName $x={b.lx} $y={b.y + 84}>{b.name}</BlockName>
                        </React.Fragment>
                      ))}
                    </Canvas>
                    <VScroll>
                      <svg width="7" height="4"><path d="M0 4h7L3.5 0z" /></svg>
                      <VThumb />
                      <svg width="7" height="4"><path d="M0 0h7L3.5 4z" /></svg>
                    </VScroll>
                    <HScroll>
                      <svg width="4" height="8"><path d="M4 0v8L0 4z" /></svg>
                      <HThumb />
                      <svg width="4" height="8"><path d="M0 0v8l4-4z" /></svg>
                    </HScroll>
                  </CanvasGrid>
                  <ZoomBar>
                    <Grip $gap={6} />
                    <ZoomText $w={44}>Zoom:</ZoomText>
                    <ZoomText $w={60}>92%</ZoomText>
                    <Slider><SliderThumb /></Slider>
                    <ZoomButton>-</ZoomButton>
                    <ZoomButton>+</ZoomButton>
                    <ZoomButton $small>100%</ZoomButton>
                    <ZoomButton $w={25} $gap={3}>Fit</ZoomButton>
                    <Overflow gap={6} pad={0} />
                    <Grip $gap={5} />
                    <ToolIcon $w={26}>
                      <svg width="20" height="14"><path d="M0 0h20v14H0z" fill="#fff" /><path d="M1 2h9v10H1z" fill={G} /><path d="M11 2h4v10h-4z" fill="#717171" /><path d="M16 2h2v10h-2z" fill="#999" /><path d="M18.5 2h1v10h-1z" fill="#ccc" /></svg>
                    </ToolIcon>
                    <Overflow pad={0} />
                    <TimeTaken>Time Taken: 8163,99 ms</TimeTaken>
                  </ZoomBar>
                </DocBody>
              </DocColumn>
            </UpperRow>

            <LowerRow>
              <DockColumn $w={1200}>
                <DockPanel>
                  <DockHeader>
                    Errors
                    <HeaderTools><Caret /><Cross /></HeaderTools>
                  </DockHeader>
                  <Columns>
                    <Column $w={48}>Source</Column>
                    <Column $w={72}>Description</Column>
                    <Column $w={60}>Category</Column>
                  </Columns>
                </DockPanel>
                <DockTabs>
                  <DockTab $w={50}>Output</DockTab>
                  <DockTab $w={45} $on>Errors</DockTab>
                </DockTabs>
              </DockColumn>
              <DockColumn $w={357}>
                <DockPanel $bg={c.pale}>
                  <DockHeader>
                    Search
                    <HeaderTools><Caret /><Cross /></HeaderTools>
                  </DockHeader>
                  <SearchForm>
                    <SearchInput />
                    <SearchButton>Search</SearchButton>
                  </SearchForm>
                  <CheckRow><CheckBox $dark />Reference Search</CheckRow>
                  <Columns>
                    <Column $w={36}>Item</Column>
                    <Column $w={48}>Source</Column>
                    <Column $w={48}>Details</Column>
                  </Columns>
                  <ResultArea />
                </DockPanel>
              </DockColumn>
            </LowerRow>
          </MainColumn>

          <DockColumn $w={343}>
            <DockPanel $bg="#f5f5f5">
              <DockHeader $active>
                Properties
                <HeaderTools><Caret fill="#75633d" /></HeaderTools>
              </DockHeader>
              <FormBody>
                <FieldLabel $h={22} $line={19}>Name:</FieldLabel>
                <NameField>PatMax3D1</NameField>
                <FieldLabel $h={26} $line={27}>Comment:</FieldLabel>
                <CommentField />
                <FieldLabel $h={26} $line={27}>Condition:</FieldLabel>
                <ConditionRow>
                  <CheckBox />
                  <ConditionField>$referencja== 2</ConditionField>
                  <MoreButton>...</MoreButton>
                </ConditionRow>
              </FormBody>
            </DockPanel>
            <DockTabs>
              <DockTab $w={54}>Toolbox</DockTab>
              <DockTab $w={67} $on>Properties</DockTab>
            </DockTabs>
          </DockColumn>
        </Workspace>

        <StatusBar>
          <svg width="15" height="15"><circle cx="7.5" cy="7.5" r="7.3" fill="#1ba1e2" /><path d="M6.6 2.5h2v2h-2zM6.6 6h2v6h-2z" fill="#fff" /></svg>
          <span>Save successful.</span>
          <Saved>Last saved 13 minutes ago</Saved>
          <SaveLamp />
        </StatusBar>

        <Taskbar>
          <TaskCell $w={48}>
            <svg width="16" height="16" viewBox="0 0 16 16"><path d="M0 2.2l7-1v6.4H0zM8 1l8-1v7.6H8zM0 8.5h7v6.3l-7-1zM8 8.5h8V16l-8-1z" /></svg>
          </TaskCell>
          <WinSearch>
            <svg width="16" height="17" viewBox="0 0 16 17"><circle cx="10" cy="6" r="5.3" fill="none" stroke="#222" strokeWidth="1.3" /><path d="M6.2 9.8L0.5 16" stroke="#222" strokeWidth="1.3" /></svg>
            Wpisz tu wyszukiwane słowa
          </WinSearch>
          <TaskCell $w={48}>
            <svg width="16" height="16"><circle cx="8" cy="8" r="6.7" fill="none" stroke="#000" strokeWidth="2" /></svg>
          </TaskCell>
          <TaskCell $w={48} $gap={7}>
            <svg width="16" height="16" viewBox="0 0 16 16"><path d="M1 0v2.5h10V0M1 16v-2.5h10V16M1 4.5h10v7H1zM14.5 0v4M14.5 8.5V16" fill="none" stroke="#000" strokeWidth="1.2" /><path d="M13 4.5h3v3h-3z" /></svg>
          </TaskCell>
          <TaskCell $w={40} $run $gap={5}>
            <svg width="22" height="19" viewBox="0 0 22 19">
              <path d="M0 0h9l2 2.5h11V18H0z" fill="#e0a21c" /><path d="M0 3.5h22V18H0z" fill="#ffd562" /><path d="M4 19v-6.5q0-2 2-2h10q2 0 2 2V19h-4v-4H8v4z" fill="#3d95dd" />
            </svg>
          </TaskCell>
          <TaskCell $w={48}>
            <svg width="24" height="23" viewBox="0 0 24 23"><path d="M0 8l12-8 12 8v15H0z" fill="#0a63b5" /><path d="M0 8.5l12 8 12-8V23H0z" fill="#2fb2f0" /><path d="M3 8h18l-9 7.500z" fill="#f3f6fa" /><path d="M24 8.5L10 17l14 6z" fill="#1d93dc" /></svg>
          </TaskCell>
          <TaskCell $w={50}>
            <svg width="24" height="24" viewBox="0 0 24 24"><path d="M0 0h24v24H0z" fill="#111" /><path d="M12 4q6 0 6 6.5-0.5 6-6 10-5.5-4-6-10Q6 4 12 4z" fill="#f2f2f2" /><path d="M7 11q4 0.5 4.3 4.5-3.8 0-4.3-4.5zM17 11q-4 0.5-4.3 4.5 3.8 0 4.3-4.5z" fill="#111" /></svg>
          </TaskCell>
          <TaskCell $w={48}>
            <svg width="24" height="24" viewBox="0 0 24 24">
              <defs>
                <linearGradient id="edgeTop" x1="0" x2="1"><stop offset="0" stopColor="#1d9bde" /><stop offset="0.6" stopColor="#36c5d6" /><stop offset="1" stopColor="#63d957" /></linearGradient>
              </defs>
              <circle cx="12" cy="12" r="12" fill="#0f68b8" />
              <path d="M0 11Q1 0 12 0t12 10.5q0 5.5-5.5 5.5-4.5 0-4.5-2 1-1.2 1-3 0-4.5-5-4.5Q3.5 6.500 0 11z" fill="url(#edgeTop)" />
              <path d="M8 11q-2 9.5 7 11 4-0.5 6.5-4.5-4 1.7-7.5 0.5-5-2-4-8z" fill="#0c4a94" />
              <path d="M14 14q0 2 4.5 2 2.7 0 4.2-1.3l0.5 2.3-2 1.5Q15 20 11.5 15q0-3 1.5-4z" fill="#e9ebed" />
            </svg>
          </TaskCell>
          <TaskCell $w={49} $gap={1}>
            <svg width="23" height="24" viewBox="0 0 23 24"><ellipse cx="11.5" cy="12" rx="11.5" ry="12" fill="#e3142a" /><ellipse cx="11.5" cy="12" rx="5" ry="9" fill="#eef0f2" /></svg>
          </TaskCell>
          <TaskCell $w={46} $run $on $gap={7}>
            <svg width="24" height="24" viewBox="0 0 24 24"><path d="M0 0h24v24H0z" fill="#fff" /><svg x="0" y="3"><Cognex w={23} /></svg></svg>
          </TaskCell>
          <TaskCell $w={40} $run $gap={9}>
            <svg width="24" height="24" viewBox="0 0 24 24">
              <path d="M1 11v8q3 4.500 11 4.500T23 19v-8z" fill="#6e7174" />
              <path d="M7 15v8q3 0.700 5 0.500V15z" fill="#94979a" />
              <ellipse cx="12" cy="11.500" rx="11" ry="4.800" fill="#b5b9bc" />
              <path d="M12 11.500l3 4.500q6-0.500 8-4l-3-3z" fill="#2a7ea5" />
              <path d="M2 9l9 2V1Q4 2.500 2 9z" fill="#f5f5f5" />
              <path d="M12.500 0.500q7 1 9 6l-8 4z" fill="#fafafa" />
            </svg>
          </TaskCell>
          <TaskCell $w={40} $run>
            <svg width="24" height="21" viewBox="0 0 24 21"><path d="M0 0h24v21H0z" fill="#9aa0a6" /><path d="M1 3h22v17H1z" fill="#000" /><path d="M6 6.500H4v3h2M8 6.500v1M8 9v1M10 6l1.500 4M13 6.500v3M15 10h4" stroke="#eee" fill="none" /></svg>
          </TaskCell>
          <Tray>
            <TrayIcon $w={26}><svg width="13" height="8"><path d="M1 7l5.5-5.5L12 7" fill="none" stroke="#000" strokeWidth="1.2" /></svg></TrayIcon>
            <TrayIcon $w={21}><svg width="12" height="16" viewBox="0 0 12 16"><path d="M1 4.500h7v7H1zM8.500 6.500h2v3h-2M3 1.800q2-1.500 4.500 0M3 14.200q2 1.500 4.500 0" fill="none" stroke="#000" strokeWidth="1.2" /></svg></TrayIcon>
            <TrayIcon $w={24}><svg width="17" height="13" viewBox="0 0 17 13"><path d="M0 2h6v2.5L4.5 6h-3L0 4.5zM1.5 0v2M4.5 0v2M3 6v5h2" stroke="#000" fill="none" /><path d="M6.5 3.5h8.5v8H5" fill="none" stroke="#000" /><path d="M7 5h7v5H5V7zM15.5 6H17v3h-1.5z" /></svg></TrayIcon>
            <TrayIcon $w={23}><svg width="17" height="17" viewBox="0 0 17 17"><circle cx="8" cy="8" r="7.3" fill="none" stroke="#000" /><ellipse cx="8" cy="8" rx="3.3" ry="7.3" fill="none" stroke="#000" /><path d="M1 5.5h14M1 10.5h9M8 1v14" stroke="#000" /><circle cx="12.5" cy="12.5" r="3.7" fill="#e9ebed" stroke="#000" /><path d="M10 10l5 5" stroke="#000" /></svg></TrayIcon>
            <TrayIcon $w={25}><svg width="16" height="13" viewBox="0 0 16 13"><path d="M0.6 4.5H3L6 1.5v10L3 8.5H0.6zM9.500 4l5 5M14.500 4l-5 5" fill="none" stroke="#000" strokeWidth="1.2" /></svg></TrayIcon>
            <Clock><span>13:18</span><span>07.06.2021</span></Clock>
            <Notices>
              <svg width="17" height="16"><path d="M0 0h17v12.5H8L5 16v-3.5H0z" /><path d="M3 3.5h11M3 6.5h11M3 9.5h7" stroke="#fff" /></svg>
              <NoticeCount>2</NoticeCount>
            </Notices>
            <ShowDesktop />
          </Tray>
        </Taskbar>

        <Dialog>
          <DialogTitle>
            <Cognex w={15} />
            <DialogText>Expression Builder (Condition, Boolean)</DialogText>
            <DialogClose><Cross size={11} color="#000" w={1.1} /></DialogClose>
          </DialogTitle>
          <DialogBody>
            <EditorColumn>
              <Editor>
                <Caretline />
                <Token $c="#b00000">$referencja</Token>
                <Token $c="#999">==</Token>
                <Token $c="#00008b"> 2</Token>
              </Editor>
              <ResultBar>
                <svg width="19" height="19"><circle cx="9.5" cy="9.5" r="8.8" fill="#fff" stroke="#333" /><path d="M6 8l3.5 3.5L13 8" fill="none" stroke="#222" strokeWidth="2" /></svg>
                Result: Boolean
              </ResultBar>
            </EditorColumn>
            <SideColumn>
              <Push>Help</Push>
              <Push>Validate</Push>
              <Push><Dot />Associations</Push>
              <Push>Tag Selector</Push>
              <InsertLabel>Insert</InsertLabel>
              <InsertBox>
                <Push>Tag</Push>
                <Push>Constant</Push>
                <Push>Function</Push>
                <Push>...</Push>
              </InsertBox>
            </SideColumn>
          </DialogBody>
          <DialogFoot>
            <Push $w={100}>OK</Push>
            <Push $w={100}>Cancel</Push>
          </DialogFoot>
        </Dialog>
      </Frame>
    </>
  );
}
